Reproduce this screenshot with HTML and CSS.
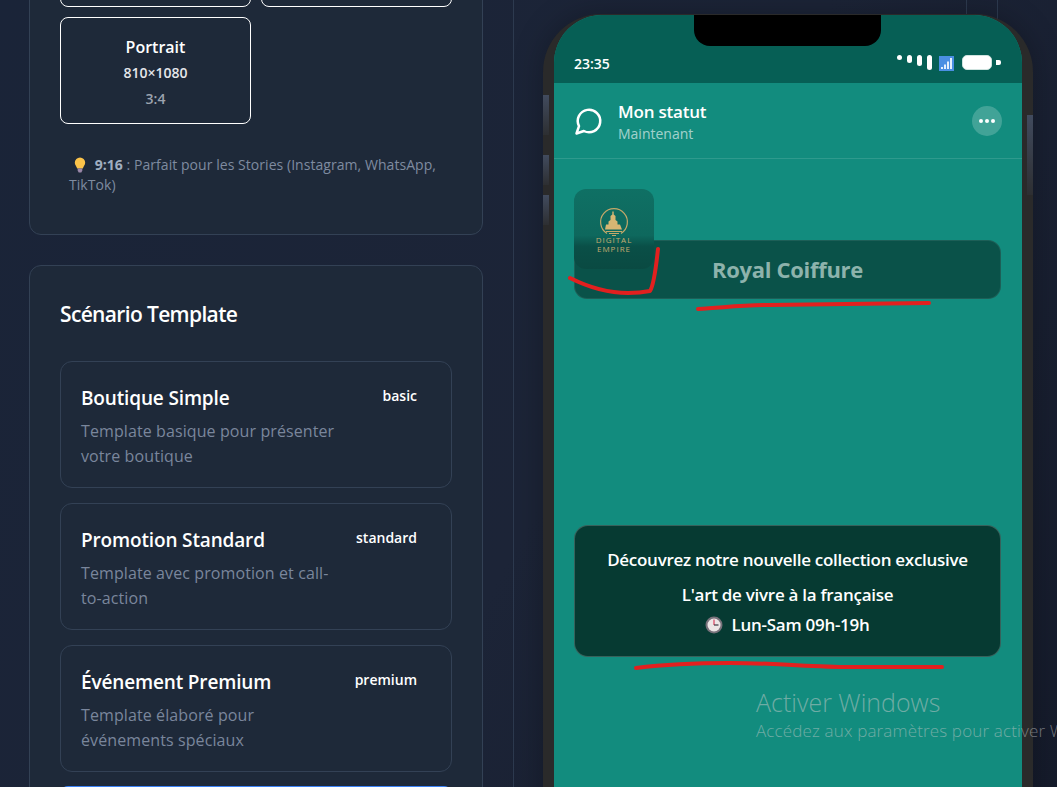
FILE: index.html
```html
<!DOCTYPE html>
<html lang="fr">
<head>
  <meta charset="UTF-8">
  <meta name="viewport" content="width=device-width, initial-scale=1.0">
  <title>Mon statut</title>
  <link rel="stylesheet" href="styles.css">
</head>
<body>
  <div class="page">
    <div class="settings">
      <section class="card">
        <div class="ratios">
          <div class="ratio"></div>
          <div class="ratio"></div>
          <div class="ratio">
            <div class="ratio-name">Portrait</div>
            <div class="ratio-size">810×1080</div>
            <div class="ratio-value">3:4</div>
          </div>
        </div>
        <p class="tip">
          <svg class="tip-bulb" width="14" height="16" viewBox="0 0 14 16">
            <path d="M7 .5a5.2 5.2 0 0 0-5.2 5.2c0 2.3 1.7 3.3 2.4 5.8h5.6c.7-2.5 2.4-3.5 2.4-5.8A5.2 5.2 0 0 0 7 .5z" fill="#fbc34a"/>
            <path d="M4.700 11.500h4.600v2.300l-1 1.700H5.700l-1-1.700z" fill="#9a87a8"/>
          </svg>
          <strong>9:16</strong> : Parfait pour les Stories (Instagram, WhatsApp, TikTok)
        </p>
      </section>

      <section class="card">
        <h2 class="card-title">Scénario Template</h2>
        <div class="templates">
          <div class="template">
            <div class="template-text">
              <h3>Boutique Simple</h3>
              <p>Template basique pour présenter votre boutique</p>
            </div>
            <span class="badge">basic</span>
          </div>
          <div class="template">
            <div class="template-text">
              <h3>Promotion Standard</h3>
              <p>Template avec promotion et call-to-action</p>
            </div>
            <span class="badge">standard</span>
          </div>
          <div class="template">
            <div class="template-text">
              <h3>Événement Premium</h3>
              <p>Template élaboré pour événements spéciaux</p>
            </div>
            <span class="badge">premium</span>
          </div>
        </div>
        <div class="generate"></div>
      </section>
    </div>

    <div class="preview">
      <div class="phone">
        <span class="side-btn side-btn-1"></span>
        <span class="side-btn side-btn-2"></span>
        <span class="side-btn side-btn-3"></span>
        <span class="side-btn side-btn-4"></span>
        <div class="screen">
          <div class="notch"></div>
          <div class="statusbar">
            <span class="time">23:35</span>
            <div class="status-icons">
              <div class="bars">
                <i class="bar-1"></i><i class="bar-2"></i><i class="bar-3"></i><i class="bar-4"></i>
              </div>
              <svg class="signal" width="15" height="15" viewBox="0 0 15 15">
                <rect width="15" height="15" fill="#4a8fe3"/>
                <path d="M2 11h2v2H2zM5 8.500h2V13H5zM8 5.500h2V13H8zM11 2h2v11h-2z" fill="#e4effc"/>
              </svg>
              <div class="battery"></div>
              <div class="battery-tip"></div>
            </div>
          </div>

          <div class="chat-head">
            <svg class="chat-icon" width="30" height="30" viewBox="0 0 24 24" fill="none" stroke="#fff" stroke-width="2" stroke-linecap="round" stroke-linejoin="round">
              <path d="M7.900 20A9 9 0 1 0 4 16.100L2 22z"/>
            </svg>
            <div class="chat-title">
              <div class="chat-name">Mon statut</div>
              <div class="chat-sub">Maintenant</div>
            </div>
            <div class="more"><i></i><i></i><i></i></div>
          </div>

          <div class="story">
            <div class="logo">
              <svg width="30" height="32" viewBox="0 0 30 32" fill="none">
                <path d="M8 27.500A13.400 13.400 0 1 1 22 27.500" stroke="#c5a869" stroke-width="1.200"/>
                <path d="M6 23.500l1-5h2.500v-3l2-1.500v-4l1.800-1.500V5.500h1.400v3l1.800 1.500v4l2 1.500v3H21l2 5z" fill="#d6b673"/>
                <path d="M7 25.500h16M10 27.500h10M13 29.500h4" stroke="#c5a869" stroke-width="1"/>
              </svg>
              <div class="logo-name">DIGITAL<br>EMPIRE</div>
            </div>
            <div class="brand">Royal Coiffure</div>
            <div class="caption">
              <p class="caption-main">Découvrez notre nouvelle collection exclusive</p>
              <p class="caption-line">L'art de vivre à la française</p>
              <p class="caption-hours">
                <svg width="18" height="18" viewBox="0 0 18 18">
                  <circle cx="9" cy="9" r="8.500" fill="#77717a"/>
                  <circle cx="9" cy="9" r="6.500" fill="#ece6e6"/>
                  <path d="M9 3.500V9" stroke="#d9415f" stroke-width="1.200"/>
                  <path d="M9 9h4.500" stroke="#3a3640" stroke-width="1.200"/>
                </svg>
                Lun-Sam 09h-19h
              </p>
            </div>
          </div>
        </div>
      </div>
    </div>
  </div>

  <div class="watermark">
    <div class="watermark-title">Activer Windows</div>
    <div class="watermark-sub">Accédez aux paramètres pour activer Windows.</div>
  </div>

  <svg class="scribbles" width="1057" height="787" viewBox="0 0 1057 787" fill="none" stroke="#e2201f" stroke-width="4" stroke-linecap="round" stroke-linejoin="round">
    <path d="M570 278C582 284 604 293 628 293C638 293 645 292 650 291C654 285 656 268 658 249"/>
    <path d="M698 309C722 308 738 305 770 305C820 304 880 304 929 303"/>
    <path d="M636 668C660 665 690 663 730 663C780 663 810 667 850 667C880 667 915 667 942 667"/>
  </svg>
</body>
</html>
```

FILE: styles.css
```css
* {
  box-sizing: border-box;
}
html, body {
  height: 100%;
}
body {
  margin: 0;
  overflow: hidden;
  font-family: "Open Sans", "Noto Sans", Arial, sans-serif;
  color: #fff;
  background: linear-gradient(120deg, #1a2438 0%, #1c2437 55%, #151b2b 100%);
}
h2, h3, p {
  margin: 0;
}
.page {
  display: flex;
  align-items: flex-start;
}

/* left column */
.settings {
  flex: 0 0 514px;
  margin-top: -131px;
  padding: 0 30px 0 29px;
  border-right: 1px solid #2d3a4f;
  height: 1100px;
}
.card {
  background: #1e2939;
  border: 1px solid #334155;
  border-radius: 12px;
  padding: 30px;
  margin-bottom: 30px;
}
.card-title {
  font-size: 21px;
  font-weight: 600;
  line-height: 36px;
  letter-spacing: -0.65px;
  margin-bottom: 29px;
}
.ratios {
  display: grid;
  grid-template-columns: 191px 191px;
  gap: 10px;
}
.ratio {
  height: 107px;
  border: 1px solid #fff;
  border-radius: 8px;
  text-align: center;
  padding-top: 16px;
}
.ratio-name {
  font-size: 16px;
  font-weight: 600;
  line-height: 26px;
}
.ratio-size {
  font-size: 14px;
  font-weight: 600;
  line-height: 26px;
  color: #e5e7eb;
}
.ratio-value {
  font-size: 14px;
  font-weight: 600;
  line-height: 25px;
  color: #9ca3af;
}
.tip {
  margin-top: 20px;
  padding: 11px 9px 9px;
  font-size: 14px;
  line-height: 20px;
  letter-spacing: 0.05px;
  color: #7f8ba0;
}
.tip strong {
  color: #a0aec0;
}
.tip-bulb {
  margin: 0 4px 0 4px;
  vertical-align: -3px;
}
.templates {
  display: flex;
  flex-direction: column;
  gap: 15px;
}
.template {
  display: flex;
  justify-content: space-between;
  align-items: flex-start;
  height: 127px;
  padding: 20px 34px 0 20px;
  border: 1px solid #334155;
  border-radius: 12px;
}
.template-text {
  width: 262px;
}
.template h3 {
  font-size: 19px;
  font-weight: 600;
  line-height: 32px;
  letter-spacing: -0.15px;
  margin-bottom: 5px;
}
.template p {
  font-size: 16px;
  line-height: 25px;
  letter-spacing: 0.1px;
  color: #7a869c;
}
.badge {
  font-size: 14px;
  font-weight: 600;
  line-height: 28px;
}
.generate {
  height: 50px;
  margin-top: 14px;
  border-radius: 8px;
  background: #3b82f6;
}

/* right column */
.preview {
  flex: 1;
  height: 787px;
  padding: 14px 0 0 29px;
  background:
    linear-gradient(#2d3a4f, #2d3a4f) 452px 0 / 1px 100% no-repeat,
    linear-gradient(#2d3a4f, #2d3a4f) 483px 0 / 1px 100% no-repeat;
}
.phone {
  position: relative;
  width: 490px;
  height: 900px;
  padding: 1px 11px 0;
  background: #2a2a2a;
  border-radius: 58px;
  box-shadow: 0 0 30px rgba(0, 0, 0, 0.25);
}
.side-btn {
  position: absolute;
  width: 6px;
  background: linear-gradient(#414b5e, rgba(65, 75, 94, 0.15));
}
.side-btn-1 { left: 0; top: 81px; height: 40px; }
.side-btn-2 { left: 0; top: 141px; height: 30px; }
.side-btn-3 { left: 0; top: 181px; height: 30px; }
.side-btn-4 { right: 0; top: 101px; height: 80px; }
.screen {
  position: relative;
  height: 100%;
  border-radius: 48px 48px 0 0;
  overflow: hidden;
  background: #128c7e;
}
.notch {
  position: absolute;
  top: 0;
  left: 140px;
  width: 187px;
  height: 31px;
  background: #000;
  border-radius: 0 0 16px 16px;
}
.statusbar {
  display: flex;
  justify-content: space-between;
  height: 68px;
  padding: 40px 21px 0 20px;
  background: #065f55;
}
.time {
  font-size: 14px;
  font-weight: 600;
  line-height: 17px;
}
.status-icons {
  display: flex;
  align-items: flex-start;
}
.bars {
  display: flex;
  gap: 5px;
  margin-right: 7px;
}
.bars i {
  width: 5px;
  background: #fff;
  border-radius: 3px;
}
.bar-1 { height: 5px; }
.bar-2 { height: 8px; }
.bar-3 { height: 11px; }
.bar-4 { height: 15px; }
.signal {
  margin-top: 1px;
  margin-right: 8px;
}
.battery {
  width: 30px;
  height: 15px;
  background: #fff;
  border: 1px solid #cfe3df;
  border-radius: 5px;
}
.battery-tip {
  width: 5px;
  height: 5px;
  margin: 5px 0 0 4px;
  background: #fff;
  border-radius: 0 2px 2px 0;
}
.chat-head {
  display: flex;
  align-items: center;
  height: 76px;
  padding: 0 20px 0 20px;
  border-bottom: 1px solid rgba(255, 255, 255, 0.12);
}
.chat-icon {
  margin-right: 14px;
}
.chat-title {
  flex: 1;
  margin-top: 3px;
}
.chat-name {
  font-size: 17px;
  font-weight: 600;
  line-height: 22px;
  letter-spacing: -0.2px;
}
.chat-sub {
  font-size: 14px;
  line-height: 21px;
  color: rgba(255, 255, 255, 0.62);
}
.more {
  display: flex;
  justify-content: center;
  align-items: center;
  gap: 2px;
  width: 30px;
  height: 30px;
  border-radius: 50%;
  background: rgba(255, 255, 255, 0.2);
}
.more i {
  width: 4px;
  height: 4px;
  border-radius: 50%;
  background: #fff;
}
.story {
  padding: 30px 21px 0 20px;
}
.logo {
  position: relative;
  z-index: 1;
  width: 80px;
  height: 80px;
  margin-bottom: -29px;
  padding-top: 17px;
  border-radius: 12px;
  text-align: center;
  background: linear-gradient(#0f7064 0%, #0e685d 58%, #0a4f47 72%, #0a4a42 100%);
}
.logo svg {
  display: block;
  margin: 0 auto -2px;
}
.logo-name {
  font-size: 8px;
  line-height: 8.500px;
  letter-spacing: 1px;
  color: #c5ab70;
}
.brand {
  height: 59px;
  background: #0a5249;
  border: 1px solid rgba(255, 255, 255, 0.08);
  border-radius: 13px;
  text-align: center;
  font-size: 22px;
  font-weight: 700;
  line-height: 57px;
  letter-spacing: -0.3px;
  color: #8db3ac;
}
.caption {
  margin-top: 226px;
  height: 132px;
  padding-top: 21px;
  background: #063a32;
  border: 1px solid rgba(255, 255, 255, 0.2);
  border-radius: 14px;
  text-align: center;
  font-size: 17px;
  font-weight: 600;
  letter-spacing: -0.28px;
}
.caption-main {
  line-height: 26px;
}
.caption-line {
  margin-top: 9px;
  line-height: 26px;
}
.caption-hours {
  margin-top: 4px;
  line-height: 26px;
}
.caption-hours svg {
  margin-right: 4px;
  vertical-align: -3px;
}

/* overlays */
.watermark {
  position: absolute;
  left: 756px;
  top: 686px;
  white-space: nowrap;
  color: rgba(205, 205, 205, 0.5);
  font-weight: 300;
}
.watermark-title {
  font-size: 25px;
  line-height: 32px;
}
.watermark-sub {
  font-size: 17px;
  line-height: 26px;
  letter-spacing: 0.15px;
}
.scribbles {
  position: absolute;
  left: 0;
  top: 0;
}
```
